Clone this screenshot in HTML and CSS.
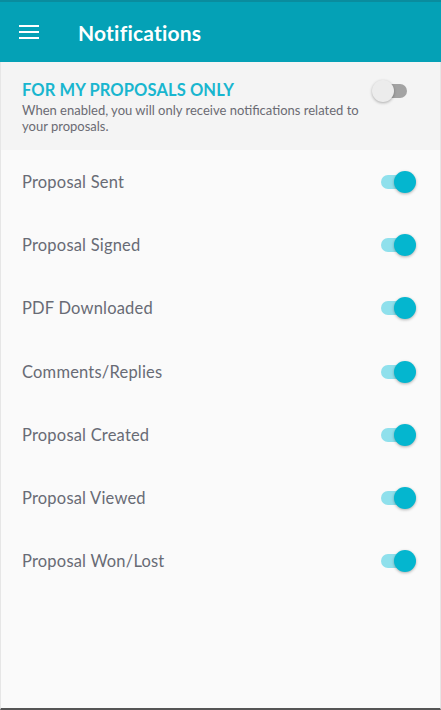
FILE: index.html
```html
<!DOCTYPE html>
<html lang="en">
<head>
  <meta charset="UTF-8" />
  <meta name="viewport" content="width=device-width, initial-scale=1.0"/>
  <title>Notifications</title>
  <link rel="stylesheet" href="styles.css">
</head>
<body>
  <div class="screen">
    <header class="topbar">
      <svg class="menu" width="20" height="14" viewBox="0 0 20 14">
        <rect x="0" y="0" width="20" height="2" fill="#fff"/>
        <rect x="0" y="6" width="20" height="2" fill="#fff"/>
        <rect x="0" y="12" width="20" height="2" fill="#fff"/>
      </svg>
      <h1>Notifications</h1>
    </header>

    <section class="mine">
      <div class="mine-text">
        <h2>FOR MY PROPOSALS ONLY</h2>
        <p>When enabled, you will only receive notifications related to your proposals.</p>
      </div>
      <span class="switch off"><span class="knob"></span></span>
    </section>

    <ul class="list">
      <li><span>Proposal Sent</span><span class="switch on"><span class="knob"></span></span></li>
      <li><span>Proposal Signed</span><span class="switch on"><span class="knob"></span></span></li>
      <li><span>PDF Downloaded</span><span class="switch on"><span class="knob"></span></span></li>
      <li><span>Comments/Replies</span><span class="switch on"><span class="knob"></span></span></li>
      <li><span>Proposal Created</span><span class="switch on"><span class="knob"></span></span></li>
      <li><span>Proposal Viewed</span><span class="switch on"><span class="knob"></span></span></li>
      <li><span>Proposal Won/Lost</span><span class="switch on"><span class="knob"></span></span></li>
    </ul>
  </div>
</body>
</html>
```

FILE: styles.css
```css
body {
  margin: 0;
  padding: 0;
  font-family: 'Lato', sans-serif;
  background: #fafafa;
}

.screen {
  height: 708px;
  border-left: 1px solid #e6e6e6;
  border-right: 1px solid #e6e6e6;
  border-bottom: 2px solid #555;
  background: #fafafa;
  display: flex;
  flex-direction: column;
}

.topbar {
  height: 60px;
  border-top: 2px solid #0a8c9e;
  background: #04a1b6;
  display: flex;
  align-items: center;
  padding-left: 19px;
  margin: 0 -1px;
}

.menu {
  display: block;
}

.topbar h1 {
  margin: 0 0 0 39px;
  color: #fff;
  font-size: 21px;
  font-weight: 700;
  letter-spacing: 0.2px;
}

.mine {
  height: 88px;
  background: #f4f4f4;
  display: flex;
  align-items: flex-start;
  padding: 0 33px 0 21px;
}

.mine-text {
  flex: 1;
}

.mine h2 {
  margin: 18px 0 2px;
  font-size: 16.5px;
  font-weight: 700;
  color: #19b6cf;
  letter-spacing: 0.1px;
}

.mine p {
  margin: 0;
  font-size: 13px;
  line-height: 16px;
  color: #6b6b73;
  max-width: 345px;
}

.list {
  list-style: none;
  margin: 0;
  padding: 0;
}

.list li {
  height: 63.3px;
  display: flex;
  align-items: center;
  justify-content: space-between;
  padding: 0 25px 0 21px;
  font-size: 16.5px;
  color: #686b75;
  letter-spacing: 0.2px;
}

.switch {
  position: relative;
  display: block;
  width: 34px;
  height: 14px;
  border-radius: 7px;
}

.switch .knob {
  position: absolute;
  top: -4px;
  width: 22px;
  height: 22px;
  border-radius: 50%;
  box-shadow: 0 1px 3px rgba(0, 0, 0, 0.3);
}

.switch.on {
  background: #8fe0ec;
}

.switch.on .knob {
  right: -1px;
  background: #04b6cf;
}

.switch.off {
  background: #a3a3a3;
  margin-top: 22px;
}

.switch.off .knob {
  left: -1px;
  background: #ececec;
}
```
